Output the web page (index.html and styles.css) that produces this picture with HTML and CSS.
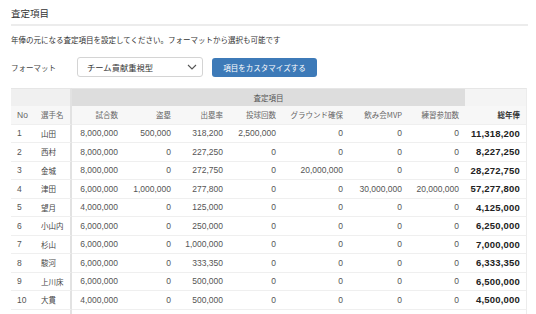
FILE: index.html
```html
<!DOCTYPE html>
<html lang="ja">
<head>
<meta charset="utf-8">
<link rel="stylesheet" href="styles.css">
</head>
<body>
<div class="page">
  <h1 class="title">査定項目</h1>
  <p class="desc">年俸の元になる査定項目を設定してください。フォーマットから選択も可能です</p>
  <div class="format-row">
    <span class="label">フォーマット</span>
    <div class="select">
      <span>チーム貢献重視型</span>
      <svg class="chev" width="10" height="6" viewBox="0 0 10 6"><path d="M1 1 L5 5 L9 1" fill="none" stroke="#555" stroke-width="1.1"/></svg>
    </div>
    <button class="btn">項目をカスタマイズする</button>
  </div>
  <table class="tbl">
    <colgroup>
      <col class="c-no"><col class="c-name"><col class="c52"><col class="c53"><col class="c52"><col class="c53"><col class="c67"><col class="c59"><col class="c57"><col class="c62">
    </colgroup>
    <thead>
      <tr class="grp">
        <th class="g-left" colspan="2"></th>
        <th class="g-mid" colspan="7">査定項目</th>
        <th class="g-right"></th>
      </tr>
      <tr class="hdr">
        <th class="l lat">No</th>
        <th class="l sep">選手名</th>
        <th>試合数</th>
        <th>盗塁</th>
        <th>出塁率</th>
        <th>投球回数</th>
        <th>グラウンド確保</th>
        <th>飲み会MVP</th>
        <th>練習参加数</th>
        <th class="tot last">総年俸</th>
      </tr>
    </thead>
    <tbody>
      <tr><td class="no">1</td><td class="nm sep">山田</td><td>8,000,000</td><td>500,000</td><td>318,200</td><td>2,500,000</td><td>0</td><td>0</td><td>0</td><td class="tot last">11,318,200</td></tr>
      <tr><td class="no">2</td><td class="nm sep">西村</td><td>8,000,000</td><td>0</td><td>227,250</td><td>0</td><td>0</td><td>0</td><td>0</td><td class="tot last">8,227,250</td></tr>
      <tr><td class="no">3</td><td class="nm sep">金城</td><td>8,000,000</td><td>0</td><td>272,750</td><td>0</td><td>20,000,000</td><td>0</td><td>0</td><td class="tot last">28,272,750</td></tr>
      <tr><td class="no">4</td><td class="nm sep">津田</td><td>6,000,000</td><td>1,000,000</td><td>277,800</td><td>0</td><td>0</td><td>30,000,000</td><td>20,000,000</td><td class="tot last">57,277,800</td></tr>
      <tr><td class="no">5</td><td class="nm sep">望月</td><td>4,000,000</td><td>0</td><td>125,000</td><td>0</td><td>0</td><td>0</td><td>0</td><td class="tot last">4,125,000</td></tr>
      <tr><td class="no">6</td><td class="nm sep">小山内</td><td>6,000,000</td><td>0</td><td>250,000</td><td>0</td><td>0</td><td>0</td><td>0</td><td class="tot last">6,250,000</td></tr>
      <tr><td class="no">7</td><td class="nm sep">杉山</td><td>6,000,000</td><td>0</td><td>1,000,000</td><td>0</td><td>0</td><td>0</td><td>0</td><td class="tot last">7,000,000</td></tr>
      <tr><td class="no">8</td><td class="nm sep">駿河</td><td>6,000,000</td><td>0</td><td>333,350</td><td>0</td><td>0</td><td>0</td><td>0</td><td class="tot last">6,333,350</td></tr>
      <tr><td class="no">9</td><td class="nm sep">上川床</td><td>6,000,000</td><td>0</td><td>500,000</td><td>0</td><td>0</td><td>0</td><td>0</td><td class="tot last">6,500,000</td></tr>
      <tr><td class="no">10</td><td class="nm sep">大貫</td><td>4,000,000</td><td>0</td><td>500,000</td><td>0</td><td>0</td><td>0</td><td>0</td><td class="tot last">4,500,000</td></tr>
      <tr class="blank"><td class="no"></td><td class="nm sep"></td><td></td><td></td><td></td><td></td><td></td><td></td><td></td><td class="tot last"></td></tr>
    </tbody>
  </table>
</div>
</body>
</html>
```
FILE: styles.css
```css
html, body {
  margin: 0;
  padding: 0;
  overflow: hidden;
  background: #fff;
}

.page {
  padding: 6px 8px 0 11px;
  font-family: "Noto Sans CJK JP", sans-serif;
  color: #333;
}

.title {
  margin: 0;
  font-size: 9.5px;
  font-weight: normal;
  line-height: 14px;
  padding-bottom: 4px;
  border-bottom: 2px solid #ececec;
  color: #333;
}

.desc {
  margin: 8px 0 0;
  font-size: 7.5px;
  line-height: 12px;
  color: #333;
}

.format-row {
  display: flex;
  align-items: center;
  margin-top: 11px;
  height: 20px;
}

.label {
  width: 66px;
  font-size: 7.5px;
  color: #444;
}

.select {
  width: 126px;
  height: 20px;
  box-sizing: border-box;
  border: 1px solid #d4d4d4;
  border-radius: 3px;
  display: flex;
  align-items: center;
  justify-content: space-between;
  padding: 0 5px 0 9px;
  font-size: 8.3px;
  color: #333;
}

.chev {
  display: block;
}

.btn {
  margin-left: 9px;
  width: 105px;
  height: 19px;
  border: none;
  padding: 0;
  background: #3d7ab8;
  color: #fff;
  border-radius: 3px;
  font-family: "Noto Sans CJK JP", sans-serif;
  font-size: 7.5px;
  display: flex;
  align-items: center;
  justify-content: center;
}

.tbl {
  margin-top: 11px;
  width: 516px;
  table-layout: fixed;
  border-collapse: separate;
  border-spacing: 0;
}

.c-no { width: 24px; }
.c-name { width: 37px; }
.c52 { width: 52px; }
.c53 { width: 53px; }
.c67 { width: 67px; }
.c59 { width: 59px; }
.c57 { width: 57px; }
.c62 { width: 62px; }

.tbl th,
.tbl td {
  box-sizing: border-box;
  height: 18.5px;
  padding: 0 6px 0 0;
  text-align: right;
  vertical-align: middle;
  white-space: nowrap;
  border-bottom: 1px solid #efefef;
  overflow: visible;
}

.tbl td {
  font-family: "Liberation Sans", sans-serif;
  font-size: 8.5px;
  color: #555;
}

.tbl th {
  font-family: "Noto Sans CJK JP", sans-serif;
  font-size: 7.5px;
  font-weight: normal;
  color: #666;
  background: #f7f7f7;
}

.grp th {
  height: 18px;
  border-bottom: none;
  border-top: 1px solid #e6e6e6;
}

.g-left {
  background: #f0f0f0 !important;
  border-right: 2px solid #e2e2e2;
}

.g-mid {
  background: #dddddd !important;
  text-align: center !important;
  padding: 0 !important;
  color: #555 !important;
}

.g-right {
  background: #f4f4f4 !important;
  border-right: 1px solid #ececec;
}

.hdr th.l {
  text-align: left;
  padding: 0 0 0 6px;
}

.hdr th.lat {
  font-family: "Liberation Sans", sans-serif;
  font-size: 8.5px;
}

.hdr th.tot {
  font-weight: bold;
  color: #333;
}

.tbl td.no {
  text-align: left;
  padding: 0 0 0 6px;
}

.tbl td.nm {
  text-align: left;
  padding: 0 0 0 6px;
  font-family: "Noto Sans CJK JP", sans-serif;
  font-size: 7.5px;
  color: #444;
}

.sep {
  border-right: 2px solid #e2e2e2;
}

.last {
  border-right: 1px solid #ececec;
}

.tbl td.tot {
  font-weight: bold;
  font-size: 9.5px;
  letter-spacing: 0.2px;
  color: #222;
}
```
